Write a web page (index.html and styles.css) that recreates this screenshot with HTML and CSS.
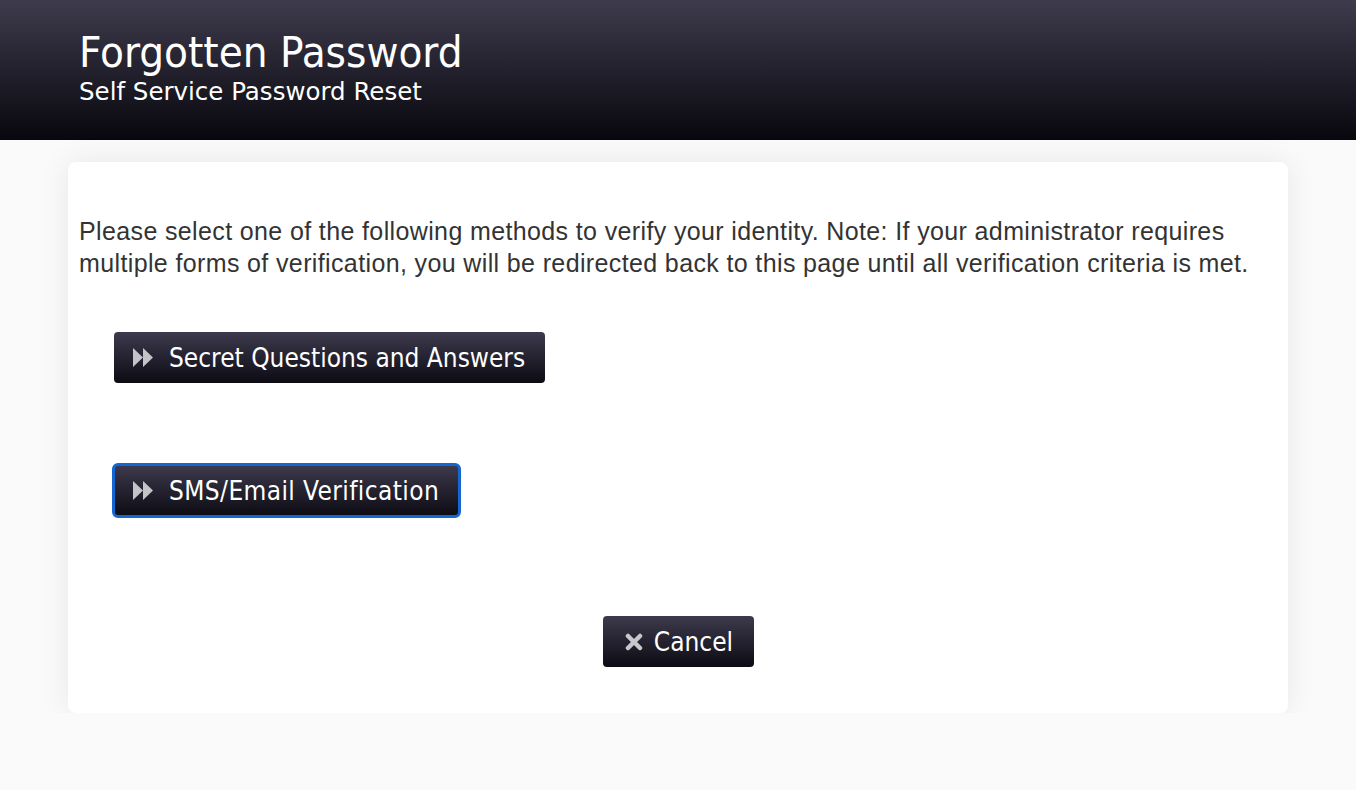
FILE: index.html
```html
<!DOCTYPE html>
<html>
<head>
<meta charset="utf-8">
<link rel="stylesheet" href="styles.css">
</head>
<body>
<header class="header">
  <div class="title">Forgotten Password</div>
  <div class="subtitle">Self Service Password Reset</div>
</header>
<main class="wrap">
  <section class="card">
    <p class="intro">Please select one of the following methods to verify your identity. Note: If your administrator requires multiple forms of verification, you will be redirected back to this page until all verification criteria is met.</p>
    <div class="methods">
      <div class="row"><button class="btn"><svg class="ico" width="20" height="19" viewBox="0 0 20 19"><path d="M0 0 L10 9.5 L0 19 Z M10 0 L20 9.5 L10 19 Z" fill="#c4c4c8"/></svg>Secret Questions and Answers</button></div>
      <div class="row"><button class="btn focused wide"><svg class="ico" width="20" height="19" viewBox="0 0 20 19"><path d="M0 0 L10 9.5 L0 19 Z M10 0 L20 9.5 L10 19 Z" fill="#c4c4c8"/></svg>SMS/Email Verification</button></div>
    </div>
    <div class="actions">
      <button class="btn cancel"><svg class="ico" width="20" height="18" viewBox="0 0 20 18"><path d="M4 3 L16 15 M16 3 L4 15" stroke="#c8c8cc" stroke-width="4.5" stroke-linecap="round"/></svg>Cancel</button>
    </div>
  </section>
</main>
</body>
</html>
```

FILE: styles.css
```css
html, body {
  margin: 0;
  padding: 0;
}
body {
  background: #fafafa;
  font-family: "Liberation Sans", Arial, sans-serif;
  color: #333;
}
.header {
  height: 140px;
  box-sizing: border-box;
  padding: 27px 0 0 79px;
  background: linear-gradient(#3e3b4d, #08070d);
  color: #fff;
  font-family: "DejaVu Sans", sans-serif;
}
.title {
  font-family: "DejaVu Sans Condensed", "DejaVu Sans", sans-serif;
  font-stretch: condensed;
  font-size: 43.5px;
  line-height: 50px;
}
.subtitle {
  font-size: 24.5px;
  line-height: 30px;
}
.wrap {
  padding: 22px 68px 0 68px;
}
.card {
  background: #fff;
  border-radius: 8px;
  box-shadow: 0 0 30px rgba(0,0,0,0.08);
  height: 551px;
  box-sizing: border-box;
  padding: 53px 10px 0 11px;
}
.intro {
  margin: 0;
  font-size: 25px;
  letter-spacing: 0.37px;
  line-height: 32px;
}
.methods {
  padding: 53px 0 0 35px;
  display: flex;
  flex-direction: column;
  gap: 82px;
}
.row {
  display: flex;
}
.btn {
  display: inline-flex;
  align-items: center;
  gap: 16px;
  height: 51px;
  box-sizing: border-box;
  padding: 0 20px 0 19px;
  border: none;
  border-radius: 4px;
  background: linear-gradient(#3d3a4d, #0c0b13);
  color: #fff;
  font-family: "DejaVu Sans Condensed", "DejaVu Sans", sans-serif;
  font-stretch: condensed;
  font-size: 26px;
}
.btn.wide {
  letter-spacing: 0.4px;
}
.btn.focused {
  outline: 3px solid #1466d0;
  outline-offset: -1px;
}
.actions {
  display: flex;
  justify-content: center;
  padding-top: 100px;
}
.cancel {
  gap: 10px;
  padding: 0 21px;
}
```
